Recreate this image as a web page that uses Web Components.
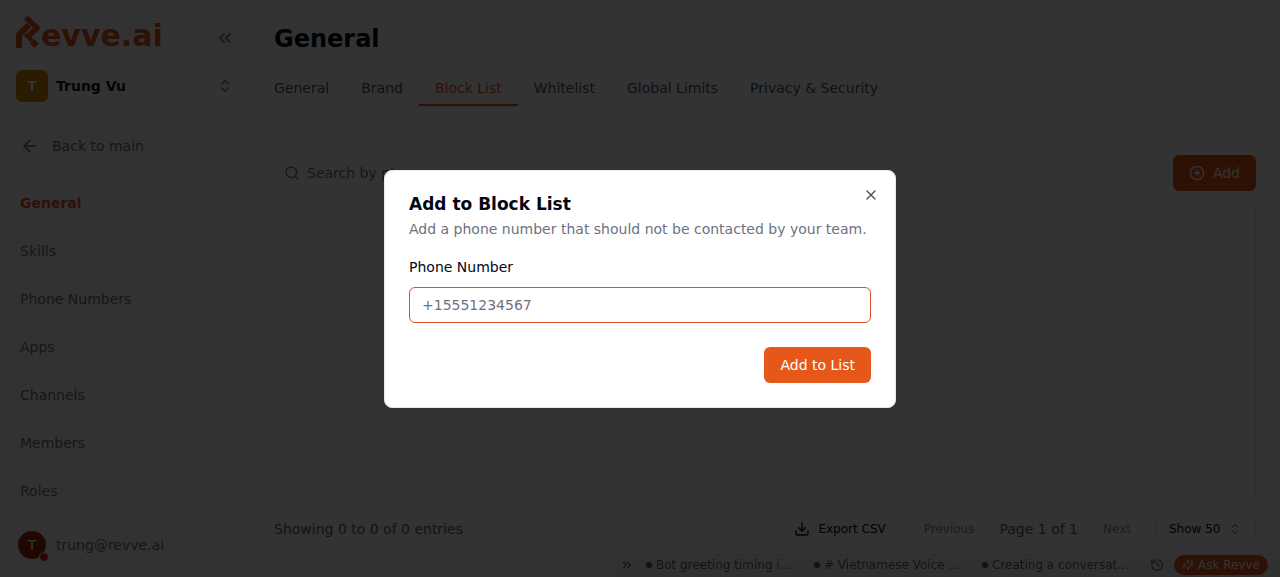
<!DOCTYPE html>
<html lang="en">
<head>
<meta charset="utf-8">
<meta name="viewport" content="width=device-width, initial-scale=1">
<title>General - Block List</title>
<style>
	body {
		margin: 0;
		font: 14px/20px "DejaVu Sans", sans-serif;
		color: #020817;
		--primary: #e6581a;
		--muted: #6b7280;
		--border: #e8e8ea;
	}

	.layout {
		display: flex;
		height: 100vh;
		overflow: hidden;
	}
</style>
</head>
<body>

<div class="layout">
	<app-sidebar>
		<nav-item active>General</nav-item>
		<nav-item>Skills</nav-item>
		<nav-item>Phone Numbers</nav-item>
		<nav-item>Apps</nav-item>
		<nav-item>Channels</nav-item>
		<nav-item>Members</nav-item>
		<nav-item>Roles</nav-item>
	</app-sidebar>
	<settings-page heading="General">
		<tab-link slot="tabs">General</tab-link>
		<tab-link slot="tabs">Brand</tab-link>
		<tab-link slot="tabs" active>Block List</tab-link>
		<tab-link slot="tabs">Whitelist</tab-link>
		<tab-link slot="tabs">Global Limits</tab-link>
		<tab-link slot="tabs">Privacy &amp; Security</tab-link>
		<block-list></block-list>
	</settings-page>
</div>

<chat-dock>
	<chat-item>Bot greeting timing i…</chat-item>
	<chat-item># Vietnamese Voice …</chat-item>
	<chat-item>Creating a conversat…</chat-item>
</chat-dock>

<modal-dialog heading="Add to Block List" description="Add a phone number that should not be contacted by your team.">
	<phone-form></phone-form>
</modal-dialog>

<script>
const icons = {
	'chevrons-left': '<path d="m11 17-5-5 5-5"/><path d="m18 17-5-5 5-5"/>',
	'chevrons-right': '<path d="m6 17 5-5-5-5"/><path d="m13 17 5-5-5-5"/>',
	'chevrons-up-down': '<path d="m7 15 5 5 5-5"/><path d="m7 9 5-5 5 5"/>',
	'arrow-left': '<path d="m12 19-7-7 7-7"/><path d="M19 12H5"/>',
	'search': '<circle cx="11" cy="11" r="8"/><path d="m21 21-4.3-4.3"/>',
	'circle-plus': '<circle cx="12" cy="12" r="10"/><path d="M8 12h8"/><path d="M12 8v8"/>',
	'download': '<path d="M21 15v4a2 2 0 0 1-2 2H5a2 2 0 0 1-2-2v-4"/><path d="m7 10 5 5 5-5"/><path d="M12 15V3"/>',
	'history': '<path d="M3 12a9 9 0 1 0 9-9 9.75 9.75 0 0 0-6.74 2.74L3 8"/><path d="M3 3v5h5"/><path d="M12 7v5l4 2"/>',
	'sparkles': '<path d="M9.9 15.5A2 2 0 0 0 8.5 14.1l-6.1-1.6a.5.5 0 0 1 0-1L8.5 9.9A2 2 0 0 0 9.9 8.5l1.6-6.1a.5.5 0 0 1 1 0l1.6 6.1a2 2 0 0 0 1.4 1.4l6.1 1.6a.5.5 0 0 1 0 1l-6.1 1.6a2 2 0 0 0-1.4 1.4l-1.6 6.1a.5.5 0 0 1-1 0z"/><path d="M20 3v4"/><path d="M22 5h-4"/><path d="M4 17v2"/><path d="M5 18H3"/>',
	'x': '<path d="M18 6 6 18"/><path d="m6 6 12 12"/>'
}

/** Attaches an open shadow root and fills it */
function render($host, html){
	const shadow = $host.attachShadow({ mode: 'open' })
	shadow.innerHTML = html
	return shadow
}

// ===== ICON =====

class UiIcon extends HTMLElement {
	connectedCallback(){
		const size = this.getAttribute('size') || 16
		render(this, `
		<style>
			:host {
				display: block;
				flex: none;
			}

			svg {
				display: block;
			}
		</style>
		<svg width="${size}" height="${size}" viewBox="0 0 24 24" fill="none" stroke="currentColor"
			stroke-width="2" stroke-linecap="round" stroke-linejoin="round" aria-hidden="true">
			${icons[this.getAttribute('name')]}
		</svg>`)
	}
}

// ===== SIDEBAR =====

class BrandLogo extends HTMLElement {
	connectedCallback(){
		render(this, `
		<style>
			:host {
				display: flex;
				align-items: center;
				color: var(--primary);
				font-size: 30px;
				font-weight: bold;
				line-height: 40px;
			}
		</style>
		<svg width="25" height="44" viewBox="0 0 25 44" fill="none" stroke="currentColor" aria-hidden="true">
			<path d="M10 3.500 21 14 11 24" stroke-width="5.500" stroke-linejoin="round"/>
			<path d="M13 11 3 20.500V34" stroke-width="6" stroke-linejoin="round"/>
			<path d="M9 20 16 27" stroke-width="4"/>
			<path d="m18.500 25.500 4 4-4 4-4-4z" fill="currentColor" stroke-width="1" stroke-linejoin="round"/>
		</svg>
		<span>evve.ai</span>`)
	}
}

class NavItem extends HTMLElement {
	connectedCallback(){
		render(this, `
		<style>
			:host {
				display: block;
			}

			a {
				display: block;
				padding: 12px;
				border-radius: 8px;
				color: var(--muted);
				text-decoration: none;
			}

			:host([active]) a {
				background: #fff;
				color: var(--primary);
				font-weight: bold;
			}
		</style>
		<a href="#"><slot></slot></a>`)
	}
}

class AppSidebar extends HTMLElement {
	connectedCallback(){
		render(this, `
		<style>
			:host {
				display: flex;
				flex-direction: column;
				flex: none;
				box-sizing: border-box;
				width: 250px;
				padding: 12px 8px 8px;
				background: #fafafa;
				border-right: 1px solid #f0f0f2;
				color: var(--muted);
			}

			button {
				border: 0;
				padding: 0;
				background: none;
				color: inherit;
				font: inherit;
				text-align: left;
			}

			.top {
				display: flex;
				justify-content: space-between;
				align-items: center;
				height: 48px;
				padding: 0 6px 0 8px;
			}

			.top button {
				padding-top: 4px;
			}

			.workspace {
				display: flex;
				align-items: center;
				gap: 8px;
				padding: 10px 8px;
				border-radius: 8px;
				background: #fcfcfc;
			}

			.workspace b {
				flex: 1;
				color: #18181b;
			}

			.tile {
				width: 32px;
				line-height: 32px;
				border-radius: 6px;
				background: #ca8a04;
				color: #fff;
				font-weight: bold;
				text-align: center;
			}

			.back {
				display: flex;
				align-items: center;
				gap: 12px;
				margin: 12px 0;
				padding: 12px;
				color: inherit;
				text-decoration: none;
			}

			nav {
				display: flex;
				flex: 1;
				flex-direction: column;
				gap: 4px;
				min-height: 0;
				margin-right: 10px;
				padding-top: 1px;
				overflow: hidden;
			}

			.user {
				display: flex;
				align-items: center;
				gap: 10px;
				padding: 10px;
			}

			.avatar {
				position: relative;
				width: 28px;
				border-radius: 50%;
				background: #9a2a0c;
				color: #fff;
				line-height: 28px;
				text-align: center;
			}

			.avatar i {
				position: absolute;
				right: -3px;
				bottom: -3px;
				width: 8px;
				height: 8px;
				border: 1px solid #fafafa;
				border-radius: 50%;
				background: #dc2626;
			}
		</style>

		<div class="top">
			<brand-logo></brand-logo>
			<button aria-label="Collapse sidebar"><ui-icon name="chevrons-left" size="20"></ui-icon></button>
		</div>
		<button class="workspace">
			<span class="tile">T</span>
			<b>Trung Vu</b>
			<ui-icon name="chevrons-up-down"></ui-icon>
		</button>
		<a class="back" href="#"><ui-icon name="arrow-left" size="20"></ui-icon>Back to main</a>
		<nav><slot></slot></nav>
		<button class="user">
			<span class="avatar">T<i></i></span>
			<span>trung@revve.ai</span>
		</button>`)
	}
}

// ===== PAGE =====

class TabLink extends HTMLElement {
	connectedCallback(){
		render(this, `
		<style>
			:host {
				display: block;
			}

			a {
				display: block;
				padding: 12px 16px 6px;
				border-bottom: 2px solid transparent;
				color: #4b5563;
				text-decoration: none;
			}

			:host([active]) a {
				border-color: var(--primary);
				color: var(--primary);
			}
		</style>
		<a href="#"><slot></slot></a>`)
	}
}

class SettingsPage extends HTMLElement {
	connectedCallback(){
		render(this, `
		<style>
			:host {
				display: flex;
				flex: 1;
				flex-direction: column;
				min-width: 0;
				background: #fff;
			}

			h1 {
				margin: 0;
				padding: 23px 24px 11px;
				font-size: 24px;
				line-height: 32px;
			}

			nav {
				display: flex;
				padding: 0 8px;
				border-bottom: 1px solid var(--border);
			}

			main {
				display: flex;
				flex: 1;
				flex-direction: column;
				min-height: 0;
				padding: 48px 24px 32px;
			}
		</style>
		<h1>${this.getAttribute('heading')}</h1>
		<nav><slot name="tabs"></slot></nav>
		<main><slot></slot></main>`)
	}
}

class BlockList extends HTMLElement {
	connectedCallback(){
		render(this, `
		<style>
			:host {
				display: flex;
				flex: 1;
				flex-direction: column;
				gap: 16px;
			}

			.toolbar {
				display: flex;
				justify-content: space-between;
			}

			.search {
				display: flex;
				align-items: center;
				gap: 7px;
				box-sizing: border-box;
				width: 256px;
				height: 36px;
				padding: 0 9px;
				border: 1px solid var(--border);
				border-radius: 6px;
				color: var(--muted);
			}

			input {
				flex: 1;
				min-width: 0;
				border: 0;
				padding: 0;
				background: none;
				font: inherit;
			}

			input::placeholder {
				color: var(--muted);
			}

			button, select {
				display: flex;
				align-items: center;
				box-sizing: border-box;
				height: 32px;
				padding: 0 12px;
				border: 1px solid var(--border);
				border-radius: 6px;
				background: #fff;
				color: inherit;
				font: 12px/16px "DejaVu Sans", sans-serif;
			}

			button:disabled {
				color: #8a8d93;
				border-color: #f6f6f7;
			}

			.add {
				gap: 8px;
				height: 36px;
				padding: 0 16px;
				border: 0;
				background: var(--primary);
				color: #fff;
				font: inherit;
			}

			.list {
				flex: 1;
				border: 1px solid var(--border);
			}

			.footer, .controls, .pager {
				display: flex;
				align-items: center;
				gap: 12px;
			}

			.footer {
				justify-content: space-between;
				color: #5b616b;
			}

			.export {
				gap: 8px;
				color: #020817;
			}

			.show {
				display: grid;
				align-items: center;
				width: 100px;
				color: #020817;
			}

			.show > * {
				grid-area: 1 / 1;
			}

			select {
				width: 100%;
				appearance: none;
			}

			.show ui-icon {
				justify-self: end;
				margin-right: 14px;
				color: #9a9da3;
				pointer-events: none;
			}
		</style>

		<div class="toolbar">
			<label class="search">
				<ui-icon name="search"></ui-icon>
				<input type="search" placeholder="Search by phone..." aria-label="Search">
			</label>
			<button class="add"><ui-icon name="circle-plus"></ui-icon>Add</button>
		</div>
		<div class="list"></div>
		<div class="footer">
			<span>Showing 0 to 0 of 0 entries</span>
			<div class="controls">
				<button class="export"><ui-icon name="download"></ui-icon>Export CSV</button>
				<div class="pager">
					<button disabled>Previous</button>
					<span>Page 1 of 1</span>
					<button disabled>Next</button>
				</div>
				<div class="show">
					<select aria-label="Rows per page">
						<option>Show 50</option>
					</select>
					<ui-icon name="chevrons-up-down" size="14"></ui-icon>
				</div>
			</div>
		</div>`)
	}
}

// ===== CHAT DOCK =====

class ChatItem extends HTMLElement {
	connectedCallback(){
		render(this, `
		<style>
			:host {
				display: block;
				width: 168px;
			}

			a {
				display: flex;
				align-items: center;
				gap: 4px;
				color: inherit;
				text-decoration: none;
				white-space: nowrap;
			}

			i {
				width: 6px;
				height: 6px;
				border-radius: 50%;
				background: #4b5563;
			}
		</style>
		<a href="#"><i></i><span><slot></slot></span></a>`)
	}
}

class ChatDock extends HTMLElement {
	connectedCallback(){
		render(this, `
		<style>
			:host {
				position: fixed;
				right: 0;
				bottom: 0;
				display: flex;
				align-items: center;
				height: 24px;
				padding: 0 12px 0 4px;
				border-top-left-radius: 12px;
				background: #f4f4f5;
				color: #5b616b;
				font-size: 12px;
				line-height: 20px;
			}

			button {
				display: flex;
				align-items: center;
				gap: 4px;
				border: 0;
				padding: 0;
				background: none;
				color: inherit;
				font: inherit;
			}

			.more {
				padding-right: 12px;
			}

			.ask {
				margin-left: 10px;
				padding: 0 8px;
				border-radius: 10px;
				background: var(--primary);
				color: #fff;
			}
		</style>
		<button class="more" aria-label="Hide chats"><ui-icon name="chevrons-right" size="14"></ui-icon></button>
		<slot></slot>
		<button aria-label="History"><ui-icon name="history" size="14"></ui-icon></button>
		<button class="ask"><ui-icon name="sparkles" size="12"></ui-icon>Ask Revve</button>`)
	}
}

// ===== MODAL =====

class ModalDialog extends HTMLElement {
	connectedCallback(){
		const shadow = render(this, `
		<style>
			:host {
				position: fixed;
				inset: 0;
				display: grid;
				place-items: center;
				background: rgba(0, 0, 0, .8);
			}

			section {
				position: relative;
				display: flex;
				flex-direction: column;
				gap: 16px;
				box-sizing: border-box;
				width: 100%;
				max-width: 512px;
				padding: 24px;
				border: 1px solid var(--border);
				border-radius: 8px;
				background: #fff;
			}

			header {
				display: flex;
				flex-direction: column;
				gap: 6px;
			}

			h2, p {
				margin: 0;
			}

			h2 {
				font-size: 17px;
				line-height: 18px;
			}

			p {
				color: var(--muted);
			}

			.close {
				position: absolute;
				top: 16px;
				right: 16px;
				border: 0;
				padding: 0;
				background: none;
				color: #4e525d;
			}
		</style>
		<section role="dialog" aria-modal="true" aria-labelledby="title">
			<header>
				<h2 id="title">${this.getAttribute('heading')}</h2>
				<p>${this.getAttribute('description')}</p>
			</header>
			<slot></slot>
			<button class="close" aria-label="Close"><ui-icon name="x"></ui-icon></button>
		</section>`)

		shadow.querySelector('.close').addEventListener('click', () => this.remove())
	}
}

class PhoneForm extends HTMLElement {
	connectedCallback(){
		render(this, `
		<style>
			:host {
				display: block;
			}

			form {
				display: flex;
				flex-direction: column;
				gap: 8px;
			}

			label {
				line-height: 24px;
			}

			input {
				box-sizing: border-box;
				width: 100%;
				height: 36px;
				padding: 0 12px;
				border: 1px solid #e2502f;
				border-radius: 6px;
				background: #fff;
				font: inherit;
			}

			input::placeholder {
				color: var(--muted);
			}

			button {
				align-self: flex-end;
				height: 36px;
				margin-top: 16px;
				padding: 0 16px;
				border: 0;
				border-radius: 6px;
				background: var(--primary);
				color: #fff;
				font: inherit;
			}
		</style>
		<form>
			<label for="phone">Phone Number</label>
			<input id="phone" type="tel" placeholder="+15551234567">
			<button type="submit">Add to List</button>
		</form>`)
			.querySelector('form').addEventListener('submit', e => e.preventDefault())
	}
}

customElements.define('ui-icon', UiIcon)
customElements.define('brand-logo', BrandLogo)
customElements.define('nav-item', NavItem)
customElements.define('app-sidebar', AppSidebar)
customElements.define('tab-link', TabLink)
customElements.define('settings-page', SettingsPage)
customElements.define('block-list', BlockList)
customElements.define('chat-item', ChatItem)
customElements.define('chat-dock', ChatDock)
customElements.define('modal-dialog', ModalDialog)
customElements.define('phone-form', PhoneForm)
</script>
</body>
</html>
